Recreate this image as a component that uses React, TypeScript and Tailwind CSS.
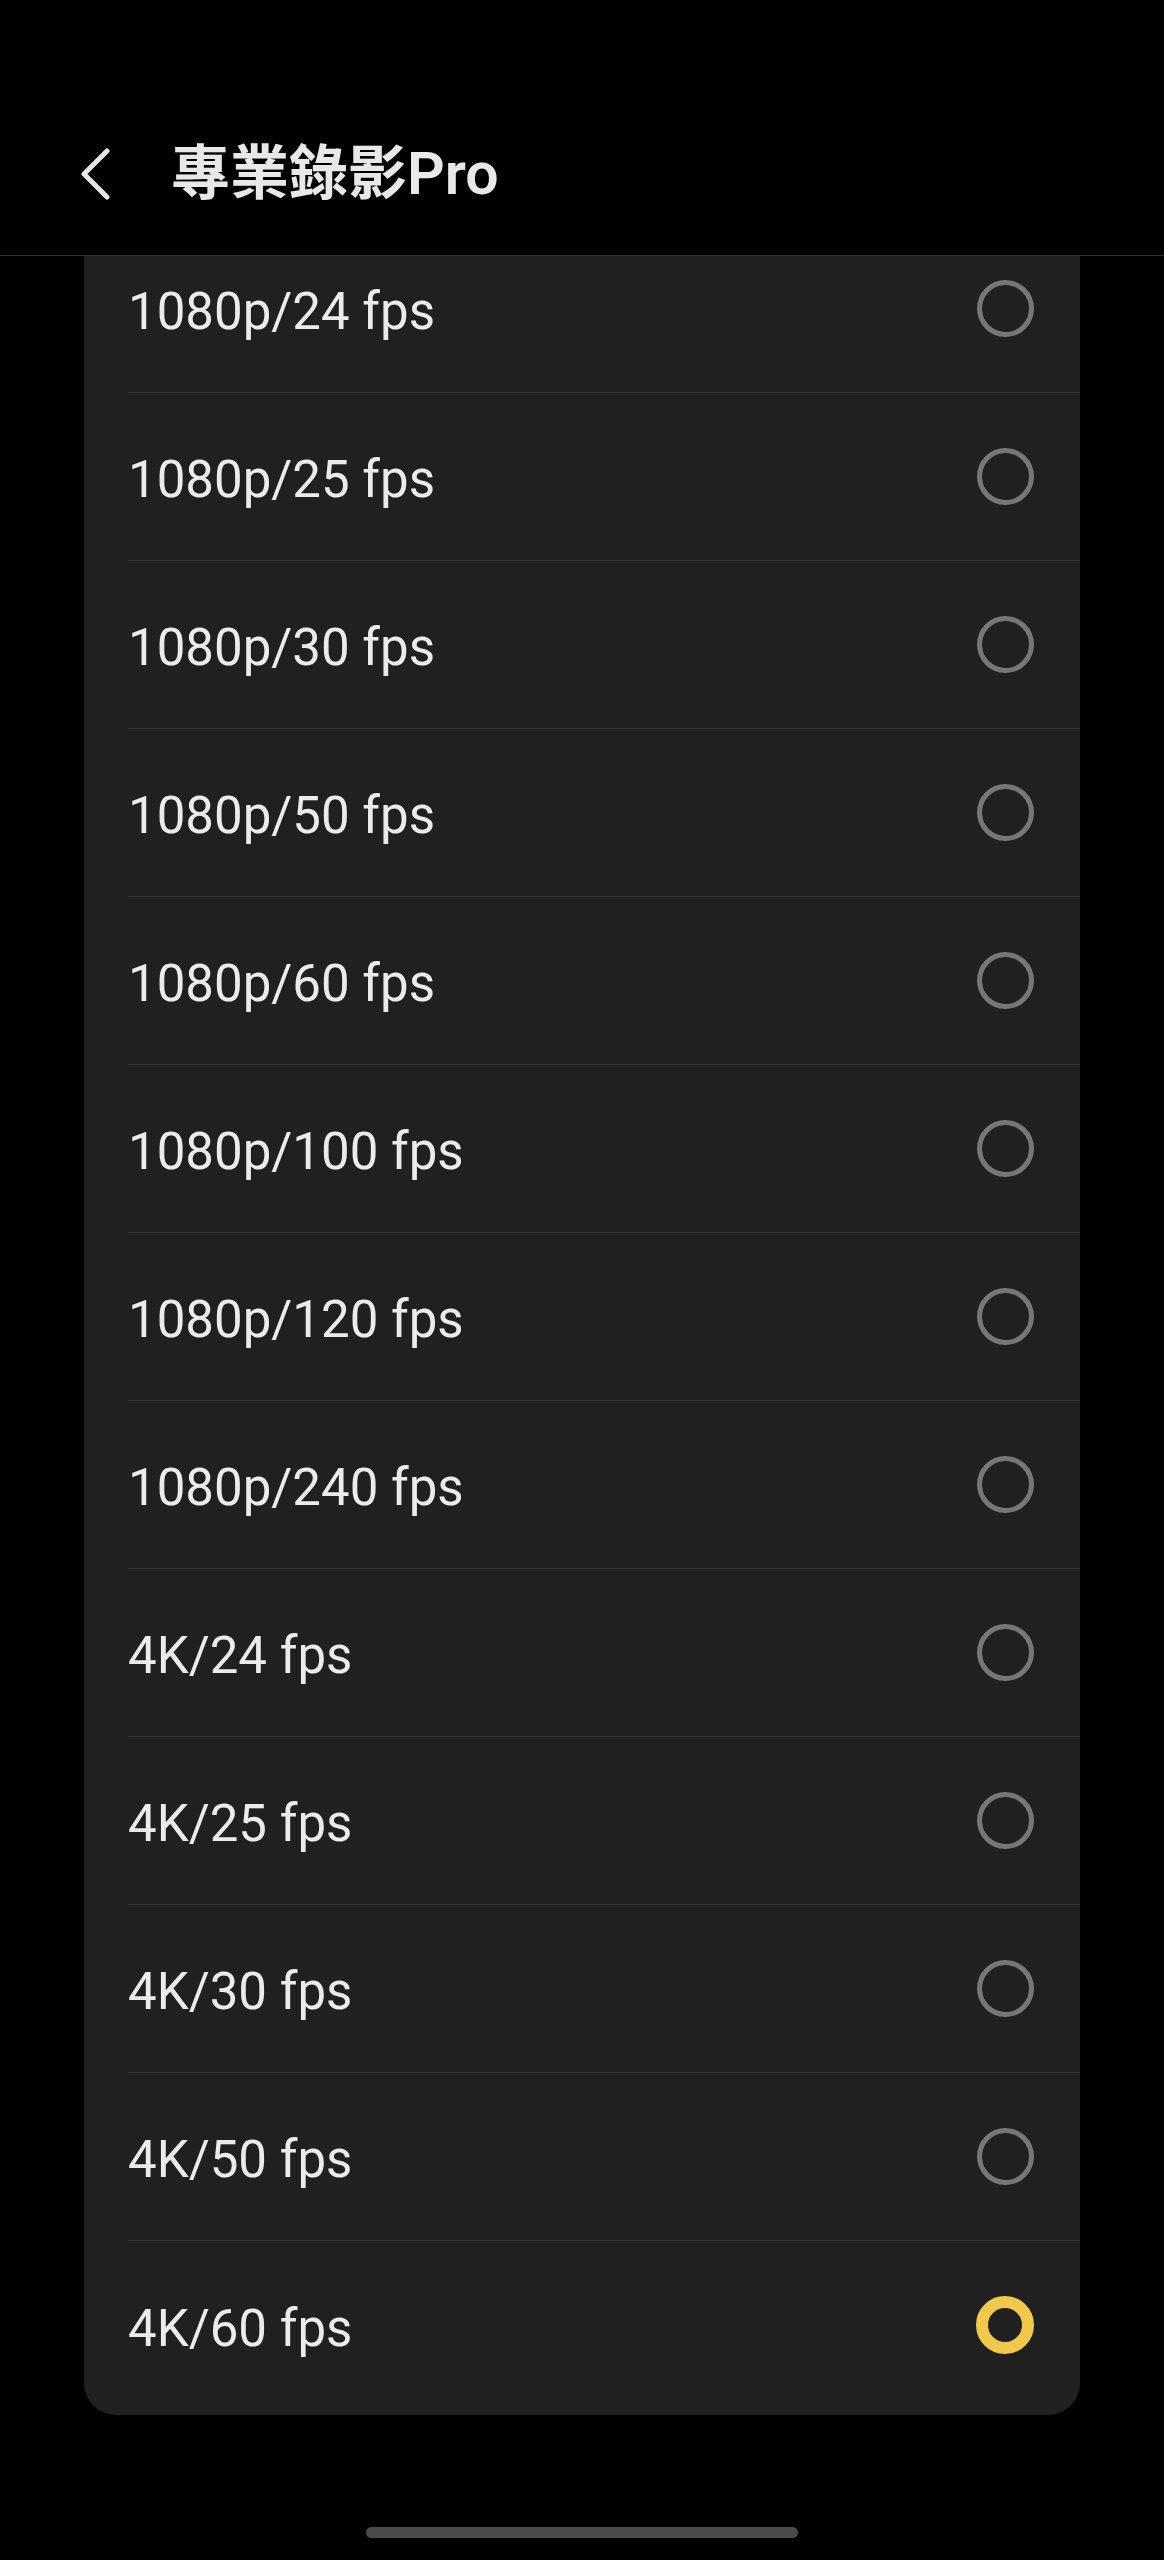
const OPTIONS = [
  '1080p/24 fps',
  '1080p/25 fps',
  '1080p/30 fps',
  '1080p/50 fps',
  '1080p/60 fps',
  '1080p/100 fps',
  '1080p/120 fps',
  '1080p/240 fps',
  '4K/24 fps',
  '4K/25 fps',
  '4K/30 fps',
  '4K/50 fps',
  '4K/60 fps',
];

const SELECTED = '4K/60 fps';

function Radio({ checked }: { checked: boolean }) {
  if (checked) {
    return <span className="block w-[58px] h-[58px] rounded-full border-[12px] border-[#f0c94b] flex-shrink-0" />;
  }
  return <span className="block w-[57px] h-[57px] rounded-full border-[5px] border-[#777777] flex-shrink-0" />;
}

export default function App() {
  return (
    <div className="min-h-[2560px] w-full bg-black flex flex-col font-['Roboto','Noto_Sans_CJK_TC',sans-serif]">
      <div className="h-[256px] pt-[92px] flex items-center border-b border-[#2e2e2e] flex-shrink-0">
        <svg className="ml-[78px]" width="34" height="52" viewBox="0 0 34 52" fill="none">
          <path d="M29 3 L6 26 L29 49" stroke="#e6e6e6" strokeWidth="5" strokeLinecap="round" strokeLinejoin="round" />
        </svg>
        <h1 className="ml-[59px] text-[59px] leading-none font-semibold text-[#e8e8e8]">
          專業錄影Pro
        </h1>
      </div>

      <div className="overflow-hidden">
        <div className="-mt-[31px] mx-[84px] bg-[#202020] rounded-b-[32px] pb-[6px]">
          {OPTIONS.map((opt, i) => (
            <div
              key={opt}
              className={`ml-[44px] pr-[46px] flex items-center justify-between ${
                i < OPTIONS.length - 1 ? 'h-[168px] border-b border-[#353535]' : 'h-[168px]'
              }`}
            >
              <span className="pt-[6px] text-[51px] leading-none text-[#ebebeb]">{opt}</span>
              <Radio checked={opt === SELECTED} />
            </div>
          ))}
        </div>
      </div>

      <div className="flex-1" />
      <div className="flex justify-center pb-[22px]">
        <div className="w-[432px] h-[11px] rounded-full bg-[#4b4b4b]" />
      </div>
    </div>
  );
}
